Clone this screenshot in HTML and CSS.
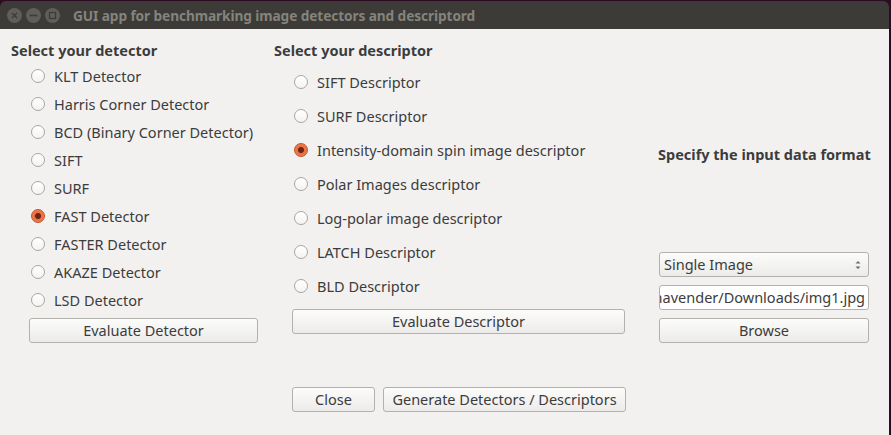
FILE: index.html
```html
<!DOCTYPE html>
<html>
<head>
<meta charset="utf-8">
<link rel="stylesheet" href="styles.css">
</head>
<body>
<div class="window">
  <div class="titlebar">
    <div class="wbtns">
      <span class="wbtn"><svg width="15" height="15" viewBox="0 0 15 15"><path d="M5 5L10 10M10 5L5 10" stroke="#3c3b37" stroke-width="1.3"/></svg></span>
      <span class="wbtn"><svg width="15" height="15" viewBox="0 0 15 15"><path d="M3.5 7.5H11.5" stroke="#3c3b37" stroke-width="1.6"/></svg></span>
      <span class="wbtn"><svg width="15" height="15" viewBox="0 0 15 15"><rect x="4.5" y="4.5" width="6" height="6" fill="none" stroke="#3c3b37" stroke-width="1.2"/></svg></span>
    </div>
    <div class="title">GUI app for benchmarking image detectors and descriptord</div>
  </div>
  <div class="content">
    <div class="top">
      <div class="col col1">
        <div class="heading">Select your detector</div>
        <div class="radios r28">
          <div class="radio"><span class="dot"></span>KLT Detector</div>
          <div class="radio"><span class="dot"></span>Harris Corner Detector</div>
          <div class="radio"><span class="dot"></span>BCD (Binary Corner Detector)</div>
          <div class="radio"><span class="dot"></span>SIFT</div>
          <div class="radio"><span class="dot"></span>SURF</div>
          <div class="radio"><span class="dot on"></span>FAST Detector</div>
          <div class="radio"><span class="dot"></span>FASTER Detector</div>
          <div class="radio"><span class="dot"></span>AKAZE Detector</div>
          <div class="radio"><span class="dot"></span>LSD Detector</div>
        </div>
        <div class="btn btn-det">Evaluate Detector</div>
      </div>
      <div class="col col2">
        <div class="heading">Select your descriptor</div>
        <div class="radios r34">
          <div class="radio"><span class="dot"></span>SIFT Descriptor</div>
          <div class="radio"><span class="dot"></span>SURF Descriptor</div>
          <div class="radio"><span class="dot on"></span>Intensity-domain spin image descriptor</div>
          <div class="radio"><span class="dot"></span>Polar Images descriptor</div>
          <div class="radio"><span class="dot"></span>Log-polar image descriptor</div>
          <div class="radio"><span class="dot"></span>LATCH Descriptor</div>
          <div class="radio"><span class="dot"></span>BLD Descriptor</div>
        </div>
        <div class="btn btn-desc">Evaluate Descriptor</div>
      </div>
      <div class="col col3">
        <div class="heading h3">Specify the input data format</div>
        <div class="combo"><span>Single Image</span><svg width="8" height="12" viewBox="0 0 8 12"><path d="M1.5 4.5L4 2L6.5 4.5Z M1.5 7.5L4 10L6.5 7.5Z" fill="#6a6a6a"/></svg></div>
        <div class="field"><span>/home/raghavender/Downloads/img1.jpg</span></div>
        <div class="btn btn-browse">Browse</div>
      </div>
    </div>
    <div class="bottom">
      <div class="btn btn-close">Close</div>
      <div class="btn btn-gen">Generate Detectors / Descriptors</div>
    </div>
  </div>
</div>
</body>
</html>
```
FILE: styles.css
```css
html, body {
  margin: 0;
  padding: 0;
}
body {
  background: #2d0b22;
  width: 891px;
  height: 435px;
  overflow: hidden;
  font-family: "Noto Sans", "DejaVu Sans", sans-serif;
  font-size: 14.5px;
  color: #3c3c3c;
}
.window {
  margin-top: 1px;
  width: 889px;
  height: 434px;
  display: flex;
  flex-direction: column;
}
.titlebar {
  height: 28px;
  background: #3c3b37;
  border-top-right-radius: 6px;
  border-top-left-radius: 6px;
  display: flex;
  align-items: center;
}
.wbtns {
  display: flex;
  gap: 4px;
  margin-left: 7px;
}
.wbtn {
  width: 15px;
  height: 15px;
  border-radius: 50%;
  background: #5f5e5a;
  display: flex;
}
.title {
  margin-left: 13px;
  font-weight: bold;
  color: #85837d;
  font-size: 13.7px;
  letter-spacing: -0.1px;
}
.content {
  flex: 1;
  background: #f2f1f0;
  display: flex;
  flex-direction: column;
}
.top {
  display: flex;
  padding-top: 11px;
}
.col {
  display: flex;
  flex-direction: column;
}
.col1 {
  margin-left: 11px;
  width: 252px;
}
.col2 {
  margin-left: 11px;
  width: 352px;
}
.col3 {
  margin-left: 32px;
  width: 211px;
}
.heading {
  height: 20px;
  line-height: 20px;
  font-weight: bold;
  white-space: nowrap;
}
.h3 {
  margin-top: 104px;
}
.radios {
  display: flex;
  flex-direction: column;
}
.r28 { margin-top: 2px; }
.r28 .radio { height: 28px; }
.r34 { margin-top: 5px; }
.r34 .radio { height: 34px; }
.radio {
  display: flex;
  align-items: center;
  white-space: nowrap;
}
.dot {
  box-sizing: border-box;
  width: 14px;
  height: 14px;
  border-radius: 50%;
  border: 1px solid #a8a6a2;
  background: linear-gradient(#ffffff, #f4f3f2);
  margin-left: 20px;
  margin-right: 9px;
}
.dot.on {
  border-color: #c2532a;
  background: radial-gradient(circle at 50% 50%, #6e2416 0 2.6px, #e8703f 3.4px, #ee8457 100%);
}
.btn {
  box-sizing: border-box;
  height: 25px;
  border: 1px solid #b3b1ac;
  border-radius: 3px;
  background: linear-gradient(#fcfcfb, #ecebea);
  display: flex;
  align-items: center;
  justify-content: center;
  white-space: nowrap;
  padding-bottom: 2px;
}
.btn-det {
  margin-left: 18px;
  width: 229px;
  margin-top: 4px;
}
.btn-desc {
  margin-left: 18px;
  width: 333px;
  margin-top: 6px;
}
.combo {
  box-sizing: border-box;
  margin-top: 88px;
  margin-left: 1px;
  width: 210px;
  height: 25px;
  border: 1px solid #b3b1ac;
  border-radius: 3px;
  background: linear-gradient(#fcfcfb, #ecebea);
  display: flex;
  align-items: center;
  justify-content: space-between;
  padding: 0 6px 2px 4px;
}
.combo svg {
  margin-top: 2px;
}
.field {
  box-sizing: border-box;
  margin-top: 8px;
  margin-left: 1px;
  width: 210px;
  height: 25px;
  border: 1px solid #b3b1ac;
  border-radius: 3px;
  background: #ffffff;
  display: flex;
  align-items: center;
  justify-content: flex-end;
  overflow: hidden;
  white-space: nowrap;
  padding: 0 3px 2px 0;
}
.field span {
  flex-shrink: 0;
}
.btn-browse {
  margin-top: 8px;
  margin-left: 1px;
  width: 210px;
}
.bottom {
  display: flex;
  gap: 8px;
  margin-top: 44px;
  padding-left: 292px;
}
.btn-close {
  width: 83px;
}
.btn-gen {
  width: 243px;
}
```
